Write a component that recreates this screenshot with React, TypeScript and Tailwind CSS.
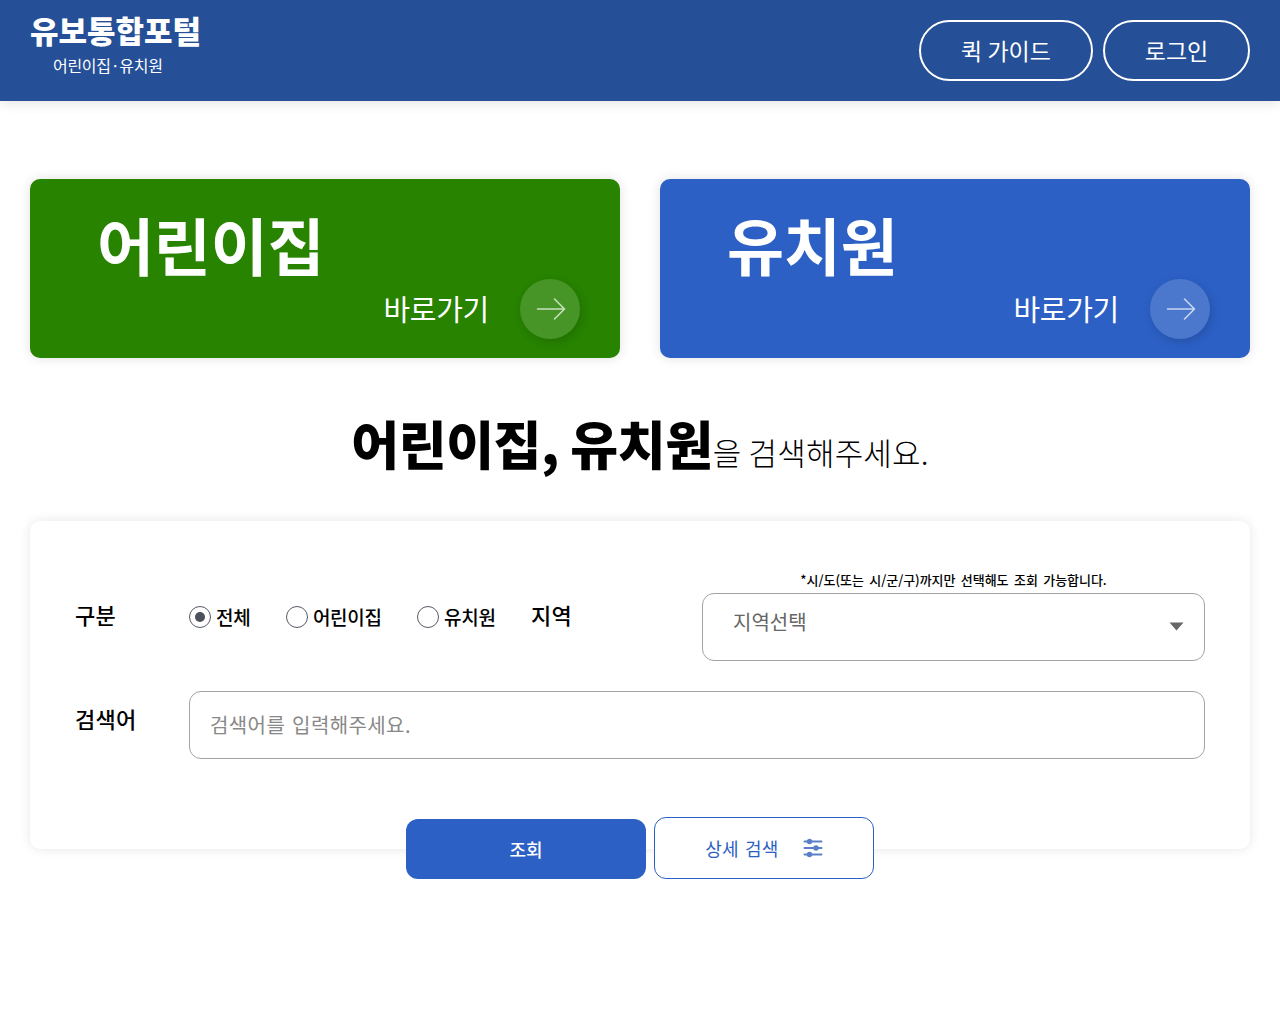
import React, { useState } from "react";

function ArrowCircle() {
  return (
    <span className="flex h-[60px] w-[60px] items-center justify-center rounded-full bg-white/15 shadow-[2px_3px_10px_rgba(0,0,0,0.15)]">
      <svg className="ml-px" width="30" height="24" viewBox="0 0 30 24" fill="none" stroke="white" strokeOpacity="0.7" strokeWidth="1.6" strokeLinecap="round" strokeLinejoin="round">
        <path d="M1.5 12h27M18.5 2l10 10-10 10" />
      </svg>
    </span>
  );
}

function ShortcutCard({ title, color }: { title: string; color: string }) {
  return (
    <a href="#" className={`flex h-[179px] flex-col rounded-[10px] pl-[67px] pr-10 text-white shadow-[0_0_12px_rgba(0,0,0,0.12)] ${color}`}>
      <span className="mt-[20px] h-[80px] text-[62px] font-bold leading-[90px] tracking-[-0.2px]">{title}</span>
      <span className="flex items-center justify-end gap-[31px]">
        <span className="text-[29px] font-normal leading-[58px] tracking-[-0.3px] pb-0.5">바로가기</span>
        <ArrowCircle />
      </span>
    </a>
  );
}

function RadioOption({ label, checked, onSelect }: { label: string; checked: boolean; onSelect: () => void }) {
  return (
    <button role="radio" aria-checked={checked} onClick={onSelect} className="flex items-center gap-[5px]">
      <span className="flex h-[22px] w-[22px] items-center justify-center rounded-full border border-[#555b66]">
        {checked && <span className="h-[10px] w-[10px] rounded-full bg-[#4b505c]" />}
      </span>
      <span className="text-[19px] font-medium leading-[28px] tracking-[-0.3px]">{label}</span>
    </button>
  );
}

export default function App() {
  const [kind, setKind] = useState("전체");
  return (
    <div className="min-h-screen overflow-hidden bg-white font-['Noto_Sans_CJK_KR',sans-serif] text-black">
      <header className="flex h-[101px] justify-between bg-[#254f96] px-[30px] text-white shadow-[0_2px_12px_rgba(0,0,0,0.12)]">
        <a href="#" className="flex flex-col whitespace-nowrap pt-[8px]">
          <span className="text-[31px] font-black leading-[44px]">유보통합포털</span>
          <span className="mt-px pl-[23px] text-[16px] leading-[24px] tracking-[-0.3px]">어린이집·유치원</span>
        </a>
        <nav className="flex gap-[10px] pt-[20px]">
          <button className="h-[61px] w-[174px] rounded-full border-2 border-white text-[23px]">퀵 가이드</button>
          <button className="h-[61px] w-[147px] rounded-full border-2 border-white text-[23px]">로그인</button>
        </nav>
      </header>

      <main className="px-[30px] pt-[78px]">
        <div className="grid grid-cols-2 gap-10">
          <ShortcutCard title="어린이집" color="bg-[#278300]" />
          <ShortcutCard title="유치원" color="bg-[#2c60c5]" />
        </div>

        <h1 className="mt-[45px] flex h-[118px] items-baseline justify-center whitespace-nowrap leading-[80px]">
          <span className="text-[52px] font-black tracking-[-0.4px]">어린이집, 유치원</span>
          <span className="text-[31px] font-light tracking-[0.2px]">을 검색해주세요.</span>
        </h1>

        <section className="h-[328px] rounded-[10px] bg-white px-[45px] pt-[48px] shadow-[0_0_12px_rgba(0,0,0,0.1)]">
          <div className="flex">
            <span className="mt-[29px] w-[114px] text-[22px] font-medium leading-[32px] tracking-[0.3px]">구분</span>
            <div role="radiogroup" className="mt-[34px] flex h-[28px] w-[342px] gap-[35.5px] whitespace-nowrap">
              {["전체", "어린이집", "유치원"].map((k) => (
                <RadioOption key={k} label={k} checked={kind === k} onSelect={() => setKind(k)} />
              ))}
            </div>
            <span className="mt-[29px] w-[171px] text-[22px] font-medium leading-[32px] tracking-[0.3px]">지역</span>
            <div className="w-[503px]">
              <p className="h-[24px] text-center text-[13px] font-medium leading-[22px] tracking-[-0.05px] [word-spacing:2.6px]">*시/도(또는 시/군/구)까지만 선택해도 조회 가능합니다.</p>
              <button className="flex h-[68px] w-full justify-between rounded-[12px] border border-[#a3a3a3] pl-[30px] pr-[20px] text-[20px] text-[#666]">
                <span className="mt-[13px] leading-[30px]">지역선택</span>
                <svg className="mt-[28px]" width="15" height="9" viewBox="0 0 15 9"><path d="M.5.5h14l-7 8z" fill="#666" /></svg>
              </button>
            </div>
          </div>
          <div className="mt-[30px] flex">
            <span className="mt-[11px] w-[114px] text-[22px] font-medium leading-[32px] tracking-[0.3px]">검색어</span>
            <input placeholder="검색어를 입력해주세요." className="h-[68px] w-[1016px] rounded-[12px] border border-[#a3a3a3] px-5 pb-0.5 text-[20px] tracking-[0.4px] [word-spacing:2px] placeholder:text-[#888]" />
          </div>
          <div className="mt-[58px] flex items-end justify-center gap-2">
            <button className="h-[60px] w-[240px] rounded-[12px] bg-[#2c60c5] text-[18px] font-medium text-white">조회</button>
            <button className="flex h-[62px] w-[220px] items-center justify-center gap-[24px] rounded-[12px] border border-[#2c60c5] bg-white text-[18px] text-[#2c60c5]">
              <span className="tracking-[0.2px] [word-spacing:2px]">상세 검색</span>
              <svg width="20" height="20" viewBox="0 0 20 20" fill="#5b80c8" stroke="#5b80c8" strokeWidth="1.9" strokeLinecap="round">
                <path d="M1.5 3.5h17M1.5 10h17M1.5 16.5h17" />
                <circle cx="6.5" cy="3.5" r="1.8" /><circle cx="13" cy="10" r="1.8" /><circle cx="6.5" cy="16.5" r="1.8" />
              </svg>
            </button>
          </div>
        </section>
      </main>
    </div>
  );
}
